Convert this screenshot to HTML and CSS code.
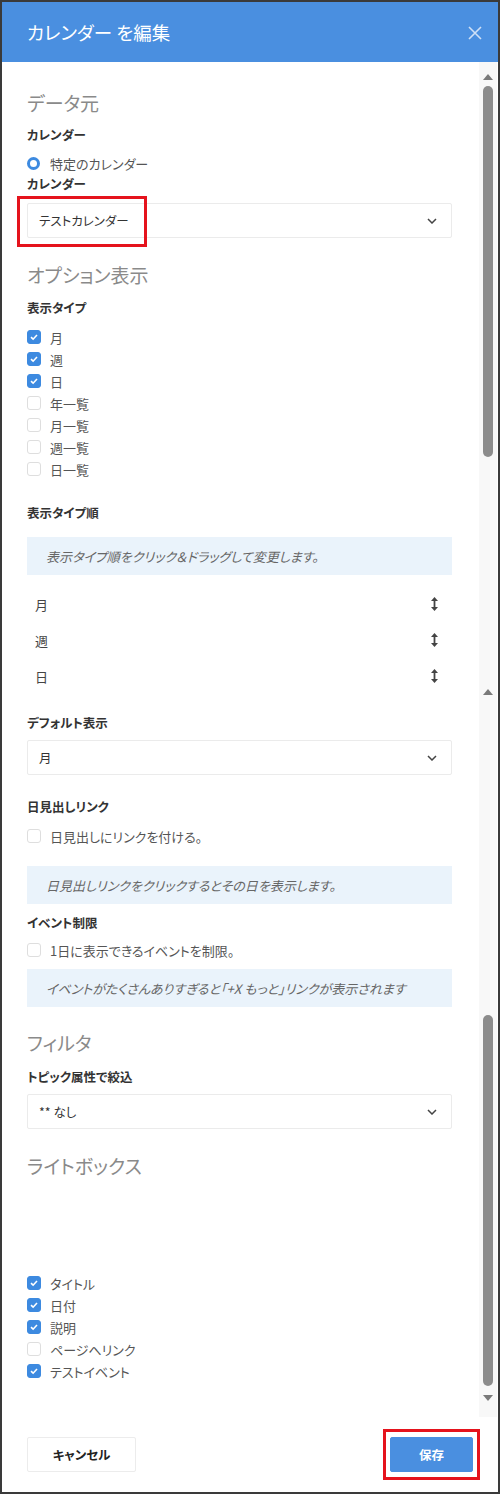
FILE: index.html
```html
<!DOCTYPE html>
<html lang="ja">
<head>
<meta charset="utf-8">
<title>カレンダー を編集</title>
<link rel="stylesheet" href="styles.css">
</head>
<body>
<div class="frame">
  <header class="hdr">
    <h1 class="title">カレンダー を編集</h1>
    <svg class="close" width="14" height="14" viewBox="0 0 14 14"><path d="M1 1L13 13M13 1L1 13" stroke="#cfe0f6" stroke-width="1.6" fill="none"/></svg>
  </header>

  <main class="body">
    <div class="content">
      <h2 class="sec">データ元</h2>
      <div class="lbl m8">カレンダー</div>
      <div class="radio-row m8"><span class="radio"></span><span>特定のカレンダー</span></div>
      <div class="lbl m1">カレンダー</div>
      <div class="select m9 marked">
        <span>テストカレンダー</span>
        <svg class="chev" width="10" height="6" viewBox="0 0 10 6"><path d="M1 1L5 5L9 1" stroke="#444" stroke-width="1.5" fill="none"/></svg>
        <span class="hl hl-select"></span>
      </div>

      <h2 class="sec m23">オプション表示</h2>
      <div class="lbl m9">表示タイプ</div>
      <div class="checks m8">
        <div class="row"><span class="cb on"><svg width="14" height="14" viewBox="0 0 14 14"><path d="M4 7.2L6.1 9.2L10 5" stroke="#fff" stroke-width="1.6" fill="none"/></svg></span><span>月</span></div>
        <div class="row"><span class="cb on"><svg width="14" height="14" viewBox="0 0 14 14"><path d="M4 7.2L6.1 9.2L10 5" stroke="#fff" stroke-width="1.6" fill="none"/></svg></span><span>週</span></div>
        <div class="row"><span class="cb on"><svg width="14" height="14" viewBox="0 0 14 14"><path d="M4 7.2L6.1 9.2L10 5" stroke="#fff" stroke-width="1.6" fill="none"/></svg></span><span>日</span></div>
        <div class="row"><span class="cb"></span><span>年一覧</span></div>
        <div class="row"><span class="cb"></span><span>月一覧</span></div>
        <div class="row"><span class="cb"></span><span>週一覧</span></div>
        <div class="row"><span class="cb"></span><span>日一覧</span></div>
      </div>

      <div class="lbl m23">表示タイプ順</div>
      <div class="info m14">表示タイプ順をクリック＆ドラッグして変更します。</div>
      <div class="sort m11">
        <div class="sort-row"><span>月</span><svg width="7" height="14" viewBox="0 0 7 14"><path d="M3.5 0L7 4H0Z M3.5 14L7 10H0Z" fill="#444"/><rect x="2.6" y="3" width="1.8" height="8" fill="#444"/></svg></div>
        <div class="sort-row"><span>週</span><svg width="7" height="14" viewBox="0 0 7 14"><path d="M3.5 0L7 4H0Z M3.5 14L7 10H0Z" fill="#444"/><rect x="2.6" y="3" width="1.8" height="8" fill="#444"/></svg></div>
        <div class="sort-row"><span>日</span><svg width="7" height="14" viewBox="0 0 7 14"><path d="M3.5 0L7 4H0Z M3.5 14L7 10H0Z" fill="#444"/><rect x="2.6" y="3" width="1.8" height="8" fill="#444"/></svg></div>
      </div>

      <div class="lbl m19">デフォルト表示</div>
      <div class="select m7">
        <span>月</span>
        <svg class="chev" width="10" height="6" viewBox="0 0 10 6"><path d="M1 1L5 5L9 1" stroke="#444" stroke-width="1.5" fill="none"/></svg>
      </div>

      <div class="lbl m22">日見出しリンク</div>
      <div class="row m8"><span class="cb"></span><span>日見出しにリンクを付ける。</span></div>
      <div class="info m19">日見出しリンクをクリックするとその日を表示します。</div>

      <div class="lbl m9">イベント制限</div>
      <div class="row m6"><span class="cb"></span><span>1日に表示できるイベントを制限。</span></div>
      <div class="info m8">イベントがたくさんありすぎると「+X もっと」リンクが表示されます</div>

      <h2 class="sec m22">フィルタ</h2>
      <div class="lbl m10">トピック属性で絞込</div>
      <div class="select m7">
        <span>** なし</span>
        <svg class="chev" width="10" height="6" viewBox="0 0 10 6"><path d="M1 1L5 5L9 1" stroke="#444" stroke-width="1.5" fill="none"/></svg>
      </div>

      <h2 class="sec m23">ライトボックス</h2>
      <div class="checks m92">
        <div class="row"><span class="cb on"><svg width="14" height="14" viewBox="0 0 14 14"><path d="M4 7.2L6.1 9.2L10 5" stroke="#fff" stroke-width="1.6" fill="none"/></svg></span><span>タイトル</span></div>
        <div class="row"><span class="cb on"><svg width="14" height="14" viewBox="0 0 14 14"><path d="M4 7.2L6.1 9.2L10 5" stroke="#fff" stroke-width="1.6" fill="none"/></svg></span><span>日付</span></div>
        <div class="row"><span class="cb on"><svg width="14" height="14" viewBox="0 0 14 14"><path d="M4 7.2L6.1 9.2L10 5" stroke="#fff" stroke-width="1.6" fill="none"/></svg></span><span>説明</span></div>
        <div class="row"><span class="cb"></span><span>ページへリンク</span></div>
        <div class="row"><span class="cb on"><svg width="14" height="14" viewBox="0 0 14 14"><path d="M4 7.2L6.1 9.2L10 5" stroke="#fff" stroke-width="1.6" fill="none"/></svg></span><span>テストイベント</span></div>
      </div>
    </div>

    <div class="scroll">
      <span class="arr up a1"></span>
      <span class="thumb t1"></span>
      <span class="arr up a2"></span>
      <span class="thumb t2"></span>
      <span class="arr down a3"></span>
    </div>
  </main>

  <footer class="ftr">
    <button class="btn cancel">キャンセル</button>
    <div class="marked">
      <button class="btn save">保存</button>
      <span class="hl hl-save"></span>
    </div>
  </footer>
</div>
</body>
</html>
```

FILE: styles.css
```css
* { box-sizing: border-box; }
html, body { margin: 0; padding: 0; }
body {
  width: 500px;
  height: 1494px;
  background: #fff;
  font-family: "Noto Sans CJK JP", "Noto Sans", sans-serif;
  font-feature-settings: "palt";
  color: #333;
}
.frame {
  width: 500px;
  height: 1494px;
  border: 2px solid #3a3a3a;
  display: flex;
  flex-direction: column;
  background: #fff;
}
.hdr {
  height: 60px;
  flex: none;
  background: #4a8fe0;
  display: flex;
  align-items: center;
  justify-content: space-between;
  padding: 0 16px 0 25px;
}
.title {
  margin: 0;
  font-size: 18.5px;
  font-weight: 400;
  color: #fff;
}
.close { display: block; margin-top: 2px; }

.body {
  flex: 1;
  position: relative;
  overflow: hidden;
}
.content {
  padding: 27px 46px 0 25px;
}
.sec {
  margin: 0;
  font-size: 19px;
  line-height: 28px;
  font-weight: 400;
  color: #8a8a8a;
}
.lbl {
  font-size: 12.5px;
  line-height: 20px;
  font-weight: 700;
  color: #333;
}
.m1 { margin-top: 1px; }
.m6 { margin-top: 6px; }
.m7 { margin-top: 7px; }
.m8 { margin-top: 8px; }
.m9 { margin-top: 9px; }
.m10 { margin-top: 10px; }
.m11 { margin-top: 11px; }
.m14 { margin-top: 14px; }
.m19 { margin-top: 19px; }
.m22 { margin-top: 22px; }
.m23 { margin-top: 23px; }
.m92 { margin-top: 92px; }

.radio-row {
  height: 20px;
  display: flex;
  align-items: center;
  font-size: 13px;
  color: #555;
}
.radio {
  width: 13px;
  height: 13px;
  border-radius: 50%;
  border: 3.5px solid #3d8ae0;
  background: #fff;
  margin-right: 10px;
}

.row {
  height: 22px;
  display: flex;
  align-items: center;
  font-size: 13px;
  color: #555;
}
.cb {
  width: 14px;
  height: 14px;
  flex: none;
  border-radius: 3px;
  border: 1px solid #dedede;
  background: #fff;
  margin-right: 9px;
  display: flex;
}
.cb.on {
  background: #3d8ae0;
  border-color: #3d8ae0;
}
.cb.on svg { margin: -1px; }

.select {
  position: relative;
  height: 35px;
  border: 1px solid #ebebeb;
  border-radius: 2px;
  display: flex;
  align-items: center;
  justify-content: space-between;
  padding: 0 14px 0 11px;
  font-size: 12.5px;
  color: #333;
}
.chev { display: block; }

.marked { position: relative; }
.hl {
  position: absolute;
  border: 3px solid #e5131d;
  pointer-events: none;
}
.hl-select { left: -11px; top: -8px; width: 130px; height: 51px; }
.hl-save { left: -7px; top: -8px; width: 97px; height: 51px; }

.info {
  height: 38px;
  background: #eaf3fb;
  display: flex;
  align-items: center;
  padding-left: 19px;
  font-size: 13px;
  font-style: italic;
  color: #666;
}

.sort-row {
  height: 36px;
  display: flex;
  align-items: center;
  justify-content: space-between;
  padding: 0 14px 0 8px;
  font-size: 13px;
  color: #444;
}
.sort-row svg { display: block; }

.scroll {
  position: absolute;
  top: 0;
  right: 1px;
  bottom: 0;
  width: 18px;
  background: #f8f8f8;
}
.arr {
  position: absolute;
  left: 4px;
  width: 0;
  height: 0;
  border-left: 5px solid transparent;
  border-right: 5px solid transparent;
}
.arr.up { border-bottom: 6px solid #7a7a7a; }
.arr.down { border-top: 6px solid #7a7a7a; }
.a1 { top: 12px; }
.a2 { top: 627px; }
.a3 { top: 1333px; }
.thumb {
  position: absolute;
  left: 4px;
  width: 10px;
  height: 371px;
  border-radius: 5px;
  background: #8c8c8c;
}
.t1 { top: 24px; }
.t2 { top: 953px; }

.ftr {
  flex: none;
  display: flex;
  justify-content: space-between;
  align-items: flex-start;
  padding: 20px 25px 20px 25px;
}
.btn {
  height: 35px;
  font-family: "Noto Sans CJK JP", "Noto Sans", sans-serif;
  font-feature-settings: "palt";
  font-size: 12.5px;
  font-weight: 700;
  border-radius: 2px;
  cursor: pointer;
  display: block;
}
.cancel {
  width: 109px;
  background: #fff;
  border: 1px solid #ececec;
  color: #222;
}
.save {
  width: 83px;
  background: #4a8fe0;
  border: 1px solid #4a8fe0;
  color: #fff;
}
```
